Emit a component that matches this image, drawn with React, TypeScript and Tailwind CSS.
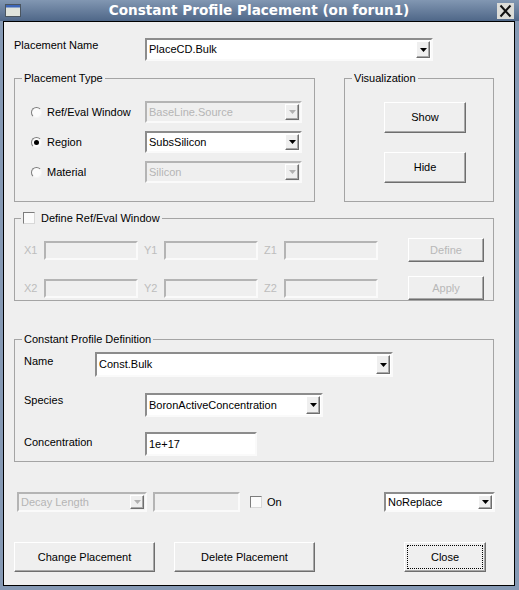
import React from "react";

const sunken = "border-2 border-t-[#8c8c8c] border-l-[#8c8c8c] border-b-[#fafafa] border-r-[#fafafa]";
const sunkenOff = "border-2 border-t-[#b4b4b4] border-l-[#b4b4b4] border-b-[#fafafa] border-r-[#fafafa]";
const raised = "border border-t-white border-l-white border-b-[#6e6e6e] border-r-[#6e6e6e] shadow-[inset_-1px_-1px_0_#a8a8a8]";

function Arrow({ disabled }: { disabled?: boolean }) {
  return (
    <div className={`mr-[1px] flex h-[calc(100%-2px)] w-[14px] items-center justify-center bg-[#efefef] ${raised}`}>
      <svg width="7" height="4" viewBox="0 0 7 4">
        <path d="M0 0h7L3.5 4z" fill={disabled ? "#b0b0b0" : "#000"} />
      </svg>
    </div>
  );
}

function Combo({ value, className, disabled }: { value: string; className: string; disabled?: boolean }) {
  return (
    <div
      className={`flex items-center ${disabled ? `${sunkenOff} bg-[#efefef] text-[#b5b5b5]` : `${sunken} bg-white`} ${className}`}
    >
      <span className="flex-1 truncate pl-[2px]">{value}</span>
      <Arrow disabled={disabled} />
    </div>
  );
}

function Field({ value, className, disabled }: { value?: string; className: string; disabled?: boolean }) {
  return (
    <div className={`flex items-center pl-[2px] ${disabled ? `${sunkenOff} bg-[#efefef]` : `${sunken} bg-white`} ${className}`}>
      {value}
    </div>
  );
}

function Button({ label, className, disabled, focused }: { label: string; className: string; disabled?: boolean; focused?: boolean }) {
  return (
    <button
      className={`flex items-center justify-center bg-[#efefef] p-[2px] ${raised} ${disabled ? "text-[#b8b8b8]" : ""} ${className}`}
    >
      {focused ? (
        <span className="flex h-full w-full items-center justify-center border border-dotted border-black">{label}</span>
      ) : (
        label
      )}
    </button>
  );
}

function Radio({ checked }: { checked?: boolean }) {
  return (
    <span className="flex h-[11px] w-[11px] items-center justify-center rounded-full border border-t-[#7c7c7c] border-l-[#7c7c7c] border-b-[#f4f4f4] border-r-[#f4f4f4] bg-[#fbfbfb]">
      {checked && <span className="h-[5px] w-[5px] rounded-full bg-black" />}
    </span>
  );
}

function Check() {
  return (
    <span className="inline-block h-[12px] w-[12px] border border-t-[#7c7c7c] border-l-[#7c7c7c] border-b-[#d8d8d8] border-r-[#d8d8d8] bg-[#fbfbfb]" />
  );
}

function Coord({ label }: { label: string }) {
  return (
    <div className="mr-[6px] flex items-center">
      <span className="w-[20px] text-[#bdbdbd]">{label}</span>
      <Field disabled className="h-[19px] w-[94px]" />
    </div>
  );
}

export default function App() {
  return (
    <div className="flex h-[590px] w-[519px] flex-col bg-[#8599b4] font-['Liberation_Sans',Arial,sans-serif] text-[11px] text-black">
      <div className="flex h-[21px] items-center bg-linear-to-b from-[#8297b2] to-[#4f6788]">
        <svg className="ml-[5px]" width="16" height="13" viewBox="0 0 16 13">
          <rect x="0.5" y="0.5" width="15" height="12" fill="#dfe3dc" stroke="#4a5560" />
          <rect x="1" y="1" width="14" height="2.5" fill="#3d66b8" />
        </svg>
        <div className="flex-1 text-center font-['DejaVu_Sans',sans-serif] text-[13.6px] font-bold leading-[21px] text-white">
          Constant Profile Placement (on forun1)
        </div>
        <svg className="mr-[5px]" width="17" height="16" viewBox="0 0 17 16">
          <rect x="0" y="0" width="17" height="16" fill="#dcdcd8" />
          <path d="M3.5 2.5l10 11M13.5 2.5l-10 11" stroke="#111" strokeWidth="2" />
        </svg>
      </div>

      <div className="mb-[4px] ml-[3px] mr-[4px] flex flex-1 flex-col border border-black bg-[#efefef] pl-[10px]">
        <div className="mt-[16px] flex h-[23px] items-start">
          <span className="w-[131px] leading-[14px]">Placement Name</span>
          <Combo value="PlaceCD.Bulk" className="h-[23px] w-[288px]" />
        </div>

        <div className="mt-[10px] flex gap-[29px]">
          <fieldset className="h-[131px] w-[301px] border border-[#a4a4a4]">
            <legend className="ml-[7px] px-[2px] leading-[14px]">Placement Type</legend>
            <div className="mt-[16px] flex flex-col gap-[8px] pl-[16px]">
              {[
                { label: "Ref/Eval Window", value: "BaseLine.Source", disabled: true },
                { label: "Region", value: "SubsSilicon", checked: true },
                { label: "Material", value: "Silicon", disabled: true },
              ].map((r) => (
                <div key={r.label} className="flex h-[22px] items-center">
                  <div className="flex w-[114px] items-center gap-[5px]">
                    <Radio checked={r.checked} />
                    <span>{r.label}</span>
                  </div>
                  <Combo value={r.value} disabled={r.disabled} className="h-[22px] w-[157px]" />
                </div>
              ))}
            </div>
          </fieldset>

          <fieldset className="h-[131px] w-[150px] border border-[#a4a4a4]">
            <legend className="ml-[7px] px-[2px] leading-[14px]">Visualization</legend>
            <div className="mt-[17px] flex flex-col gap-[19px] pl-[39px]">
              <Button label="Show" className="h-[31px] w-[82px]" />
              <Button label="Hide" className="h-[31px] w-[82px]" />
            </div>
          </fieldset>
        </div>

        <fieldset className="mt-[9px] h-[90px] w-[480px] border border-[#a4a4a4]">
          <legend className="ml-[6px] px-[2px] leading-[14px]">
            <span className="flex items-center gap-[6px]">
              <Check />
              Define Ref/Eval Window
            </span>
          </legend>
          <div className="mt-[13px] flex flex-col gap-[14px] pl-[9px]">
            <div className="flex h-[24px] items-center">
              <Coord label="X1" />
              <Coord label="Y1" />
              <Coord label="Z1" />
              <Button label="Define" disabled className="ml-[24px] h-[24px] w-[76px]" />
            </div>
            <div className="flex h-[24px] items-center">
              <Coord label="X2" />
              <Coord label="Y2" />
              <Coord label="Z2" />
              <Button label="Apply" disabled className="ml-[24px] h-[24px] w-[76px]" />
            </div>
          </div>
        </fieldset>

        <fieldset className="mt-[31px] h-[130px] w-[480px] border border-[#a4a4a4]">
          <legend className="ml-[7px] px-[2px] leading-[14px]">Constant Profile Definition</legend>
          <div className="flex flex-col pl-[9px]">
            <div className="mt-[6px] flex items-start">
              <span className="w-[71px] pt-[2px] leading-[14px]">Name</span>
              <Combo value="Const.Bulk" className="h-[25px] w-[298px]" />
            </div>
            <div className="mt-[16px] flex items-start">
              <span className="w-[121px] leading-[14px]">Species</span>
              <Combo value="BoronActiveConcentration" className="h-[24px] w-[178px]" />
            </div>
            <div className="mt-[15px] flex items-start">
              <span className="w-[121px] pt-[3px] leading-[14px]">Concentration</span>
              <Field value="1e+17" className="h-[24px] w-[112px]" />
            </div>
          </div>
        </fieldset>

        <div className="mt-[30px] flex h-[20px] w-[481px] items-center">
          <Combo value="Decay Length" disabled className="ml-[3px] h-[20px] w-[130px]" />
          <Field disabled className="ml-[6px] h-[20px] w-[87px]" />
          <span className="ml-[10px] flex items-center gap-[5px]">
            <Check />
            On
          </span>
          <Combo value="NoReplace" className="ml-auto h-[20px] w-[111px]" />
        </div>

        <div className="mt-[30px] flex">
          <Button label="Change Placement" className="h-[30px] w-[141px]" />
          <Button label="Delete Placement" className="ml-[19px] h-[30px] w-[141px]" />
          <Button label="Close" focused className="ml-[89px] h-[30px] w-[82px]" />
        </div>
      </div>
    </div>
  );
}
